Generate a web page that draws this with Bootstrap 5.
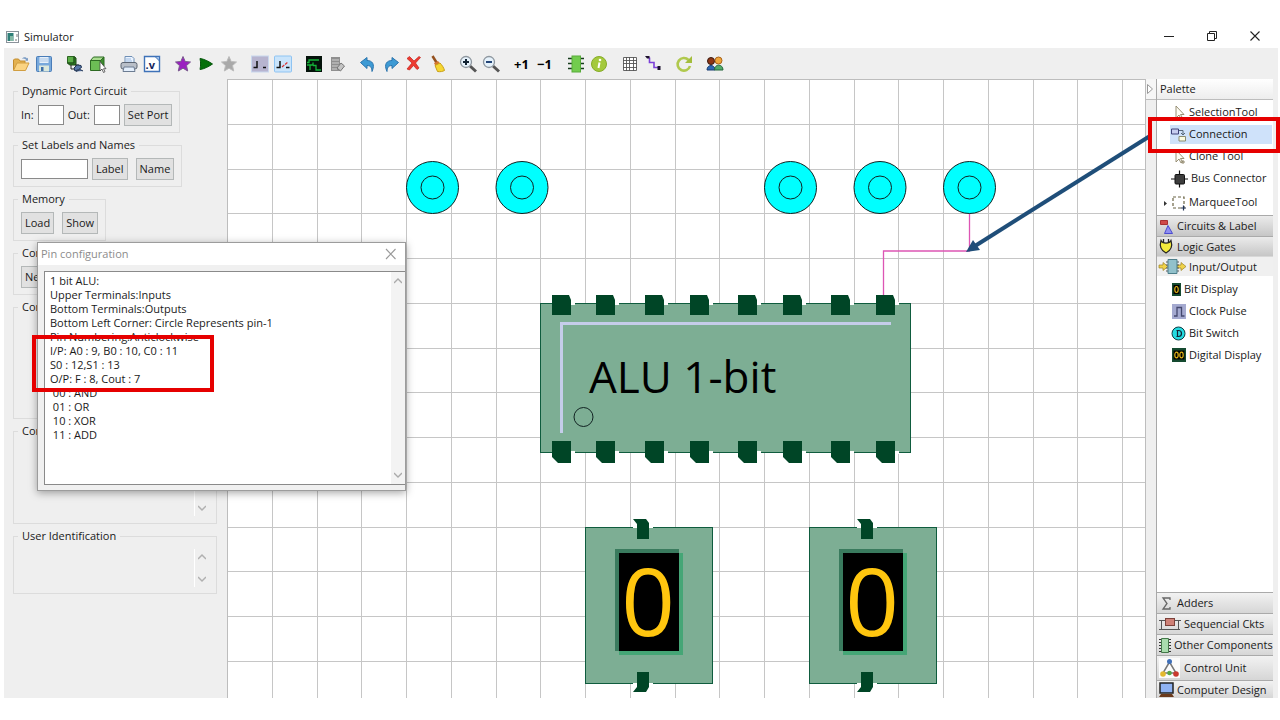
<!DOCTYPE html>
<html lang="en">
<head>
<meta charset="utf-8">
<meta name="viewport" content="width=device-width, initial-scale=1">
<title>Simulator</title>
<link href="https://cdn.jsdelivr.net/npm/bootstrap@5.3.0/dist/css/bootstrap.min.css" rel="stylesheet">
<style>
  :root { --face: #efefef; --edge: #dcdcdc; --line: #bdbdbd; --ink: #1a1a1a; }
  body { font-family: "Open Sans", "Noto Sans", sans-serif; font-size: 11px; line-height: 14px; color: var(--ink); background: #fff; }
  button { font: inherit; color: inherit; }
  .shell { min-height: 100vh; padding: 25px 2px 22px 4px; }
  .title-bar { height: 23px; padding: 0 2px; }
  .win-btn { width: 43px; height: 21px; border: 0; background: none; padding: 0; display: flex; align-items: center; justify-content: center; }
  .tool-strip { height: 31px; background: var(--face); padding-left: 5px; }
  .tool { width: 23px; height: 24px; padding: 0; border: 0; background: none; display: flex; align-items: center; justify-content: center; }
  .tool svg { width: 18px; height: 18px; overflow: visible; }
  .step { font-size: 13px; font-weight: 700; color: #000; }
  .work { background: var(--face); }
  .side { width: 223px; padding: 5px 10px 0 9px; gap: 5px; }
  .group-box { min-width: 0; border: 1px solid var(--edge); padding: 6px 7px; align-self: flex-start; }
  .group-box.wide { align-self: stretch; }
  .group-box > legend { float: none; width: auto; margin: 0 0 0 -3px; padding: 0 4px; font-size: 11px; line-height: 14px; height: 14px; }
  .field { height: 20px; border: 1px solid #8a8a8a; background: #fff; padding: 0 3px; border-radius: 0; }
  .field-s { width: 26px; } .field-m { width: 67px; }
  .push { height: 22px; border: 1px solid #b4b8b8; background: #e1e1e1; padding: 0 3px; }
  .h-a { min-height: 119px; } .h-b { min-height: 100px; } .h-c { min-height: 62px; }
  .spin { width: 15px; border-left: 1px solid #fff; padding: 4px 0; }
  .spin-l { height: 72px; } .spin-s { height: 38px; }
  .board { background: #fff; border: 1px solid var(--line); border-bottom: 0; min-width: 0; }
  .board svg { display: block; width: 100%; height: 100%; }
  .flyout { width: 10px; }
  .flyout button { width: 10px; height: 21px; padding: 0; border: 0; border-bottom: 1px solid var(--line); background: #f6f6f6; display: flex; align-items: center; }
  .palette { width: 117px; margin-right: 5px; background: #fff; border-left: 1px solid #a8a8a8; }
  .palette-head { height: 21px; padding-left: 3px; border-bottom: 1px solid var(--line); background: linear-gradient(#fff, #ededed); }
  .tools-list { padding-top: 1px; } .parts-list { padding-top: 2px; }
  .entry { height: 22px; border: 0; background: none; padding: 0 0 0 14px; display: flex; align-items: center; gap: 3px; text-align: left; white-space: nowrap; width: 100%; }
  .entry svg { width: 15px; height: 15px; flex: none; overflow: visible; }
  .entry svg.w17 { width: 17px; } .entry svg.w10 { width: 10px; } .entry svg.w5 { width: 5px; }
  .entry.tall { height: 26px; padding-left: 6px; }
  .entry.picked { background: linear-gradient(#cfe2fa, #cfe2fa) no-repeat 13px 2px / 102px 19px; }
  .drawer { height: 21px; border: 0; border-top: 1px solid #aaa; padding: 0 0 0 2px; background: linear-gradient(#ebebeb, #c6c6c6); display: flex; align-items: center; gap: 3px; text-align: left; white-space: nowrap; width: 100%; }
  .drawer.soft { background: linear-gradient(#f2f2f2, #d6d6d6); }
  .drawer.slim { height: 20px; }
  .drawer.open { height: 20px; background: #f0f0f0; border-color: #d8d8d8; }
  .drawer.tight { gap: 0; }
  .drawer.big { height: 25px; } .drawer.low { height: 18px; }
  .drawer svg { width: 15px; height: 15px; flex: none; overflow: visible; }
  .drawer svg.w22 { width: 22px; } .drawer svg.w27 { width: 27px; } .drawer svg.h20 { height: 20px; }
  .pin-window { left: 33px; top: 163px; width: 369px; height: 249px; background: #f0f0f0; border: 1px solid #9c9c9c; box-shadow: 0 2px 8px rgba(0,0,0,.35); }
  .pin-title { height: 22px; background: #fff; color: #8c8c8c; padding: 0 3px; }
  .pin-body { margin: 6px 0 5px 6px; border: 1px solid #8a8a8a; border-right: 0; background: #fff; }
  .pin-text { border: 0; resize: none; padding: 2px 5px; overflow: hidden; outline: 0; line-height: 14px; color: var(--ink); background: #fff; font: inherit; }
  .pin-scroll { width: 14px; background: #f3f3f3; padding: 6px 0; }
  .mark-box { border: 4px solid #e60000; pointer-events: none; }
  .mark-pins { left: 28px; top: 256px; width: 182px; height: 57px; }
  .mark-tool { right: -2px; top: 38px; width: 132px; height: 36px; }
  .pointer { right: 119px; top: 50px; width: 190px; height: 130px; pointer-events: none; overflow: visible; }
</style>
</head>
<body class="overflow-x-hidden">
<div class="shell d-flex flex-column">

  <header class="title-bar d-flex align-items-start">
    <svg class="align-self-center" width="14" height="12" viewBox="0 0 14 12"><rect x=".5" y=".5" width="12" height="11" fill="#fff" stroke="#8a929a"/><rect x="1.500" y="2" width="6" height="8" fill="#2f7f78"/><rect x="4" y="5" width="3" height="5" fill="#85b9a5"/><path d="M9 9h2M11 3v3" stroke="#777"/></svg>
    <span class="ms-1 flex-grow-1 align-self-center">Simulator</span>
    <button class="win-btn" aria-label="Minimize"><svg width="12" height="12" viewBox="0 0 12 12"><path d="M1 6.500h10" stroke="#222"/></svg></button>
    <button class="win-btn" aria-label="Restore"><svg width="12" height="12" viewBox="0 0 12 12" fill="none" stroke="#222"><path d="M1.500 3.500h7v7h-7zM3.500 3.500v-2h7v7h-2"/></svg></button>
    <button class="win-btn" aria-label="Close"><svg width="12" height="12" viewBox="0 0 12 12"><path d="M1.500 1.500l9 9M10.500 1.500l-9 9" stroke="#222" stroke-width="1.100"/></svg></button>
  </header>

  <nav class="tool-strip d-flex align-items-center gap-2" aria-label="Tools">
    <div class="d-flex">
      <button class="tool" aria-label="Open"><svg viewBox="0 0 18 18"><path d="M1.500 15V5l1-1h4l1.500 2h5v2" fill="#e3b14f" stroke="#c38d2e"/><path d="M10 3.500c2-2 4-1.500 5 0l1-.8v3h-3l1-1c-1-1-2.500-1-4-1.200z" fill="#7b9cc4"/><path d="M1.500 15.500L5 8h12l-3.500 7.500z" fill="#fbd482" stroke="#d19e41"/></svg></button>
      <button class="tool" aria-label="Save"><svg viewBox="0 0 18 18"><rect x="1.500" y="1.500" width="15" height="15" rx="1" fill="#78a9dc" stroke="#4a7db8"/><rect x="4.500" y="2" width="9" height="6" fill="#e6f0fa"/><path d="M5 4h8M5 6h8" stroke="#a9c5e4"/><rect x="4" y="10.500" width="10" height="6" fill="#dbe8dc"/><rect x="6" y="12" width="2.500" height="4" fill="#3d6ea8"/></svg></button>
    </div>
    <div class="d-flex">
      <button class="tool" aria-label="Build circuit"><svg viewBox="0 0 18 18"><path d="M1.500 1.500h6.500v6.500h-6.500z" fill="#5cae48" stroke="#2b6420"/><path d="M8 1.500l2 1.500v7H3.500l-2-2h6.500z" fill="#2e7a22" stroke="#1e4c16"/><path d="M5 10v4h4M9 10h4" stroke="#222" fill="none"/><path d="M8 13l3-3 4 .5.500 2-3 2-3.500 1.500zM10 16.500l4-2 3 1.500" fill="#5876a8" stroke="#1f3352"/></svg></button>
      <button class="tool" aria-label="Select block"><svg viewBox="0 0 18 18"><path d="M1.500 5.500h10v10h-10z" fill="#6cbd55" stroke="#2d6b22"/><path d="M1.500 5.500l3-3.500h10.500l-3.500 3.500z" fill="#a9dc90" stroke="#2d6b22"/><path d="M11.500 5.500L15 2v9l-3.500 4.500z" fill="#3b8c2d" stroke="#2d6b22"/><path d="M11 6.500v9.500l2-2 1.500 3.500 1.500-.8-1.500-3h2.500z" fill="#fff" stroke="#444" stroke-width=".8"/></svg></button>
    </div>
    <div class="d-flex">
      <button class="tool" aria-label="Print"><svg viewBox="0 0 18 18"><path d="M5 8V1.500h7l2 2V8" fill="#eaf3ff" stroke="#6f8fb5"/><rect x="1" y="7.500" width="16" height="6.500" rx="2" fill="#b9bfc8" stroke="#5d6673"/><path d="M4 12h10l1 4.500H3z" fill="#e4effc" stroke="#6c7c92"/><path d="M6 4h5M6 6h6" stroke="#9dbbe0"/></svg></button>
      <button class="tool" aria-label="Verilog"><svg viewBox="0 0 18 18"><path d="M1.500 1.500h15v15h-15z" fill="#fff" stroke="#3e72b8" stroke-width="1.400"/><path d="M12 1.500l4.500 4.500V1.500z" fill="#9fc0ea" stroke="#3e72b8"/><text x="2.500" y="14" font-size="11" font-weight="700" fill="#16245c">.v</text></svg></button>
    </div>
    <div class="d-flex">
      <button class="tool" aria-label="Start"><svg viewBox="0 0 18 18"><path d="M9 1.500l2.200 5 5.300.5-4 3.600 1.200 5.400L9 13.200 4.300 16l1.200-5.400-4-3.600 5.300-.5z" fill="#9a1fc0" stroke="#7a5a8e"/></svg></button>
      <button class="tool" aria-label="Run"><svg viewBox="0 0 18 18"><path d="M3 3.500c4.500.5 9.500 3.500 12.500 5.500-3 2-8 5-12.500 5.500.8-3.500.8-7.500 0-11z" fill="#06700b" stroke="#04560a"/></svg></button>
      <button class="tool" aria-label="Stop"><svg viewBox="0 0 18 18"><path d="M9 1.500l2.200 5 5.300.5-4 3.600 1.200 5.400L9 13.200 4.300 16l1.200-5.400-4-3.600 5.300-.5z" fill="#a9a9a9" stroke="#bbb"/></svg></button>
    </div>
    <div class="d-flex">
      <button class="tool" aria-label="Switch closed"><svg viewBox="0 0 18 18"><rect x=".5" y="1" width="17" height="16" fill="#b7b4cf" stroke="#c9d8ee"/><path d="M2.500 12.500H6V6" fill="none" stroke="#111" stroke-width="1.500"/><path d="M12 12.500h3" stroke="#111" stroke-width="1.500"/></svg></button>
      <button class="tool" aria-label="Switch open"><svg viewBox="0 0 18 18"><rect x=".5" y="1" width="17" height="16" rx="1" fill="#c9e4fb" stroke="#8fc4f2"/><path d="M2.500 12.500H6V6" fill="none" stroke="#111" stroke-width="1.500"/><path d="M12 12.500h3.500" stroke="#111" stroke-width="1.500"/><path d="M8 12l6-5" stroke="#d33" stroke-width="1.200" stroke-dasharray="3 1"/></svg></button>
    </div>
    <div class="d-flex">
      <button class="tool" aria-label="Timing"><svg viewBox="0 0 18 18"><rect x="1" y="1" width="16" height="16" fill="#04120a"/><path d="M2 7.500h2V5h10M2 10h6V7.500M5 15V10.500M8 10.500h3V15h5" fill="none" stroke="#15b43a" stroke-width="1.300"/></svg></button>
      <button class="tool" aria-label="Edit log"><svg viewBox="0 0 18 18"><path d="M3 2h9v14H3z" fill="#8f8f8f"/><path d="M4 5h7M4 8h7M4 11h7M4 14h5" stroke="#d0d0d0"/><path d="M9 13l4-5 3.500 3-4 5z" fill="#c4c4c4" stroke="#777"/></svg></button>
    </div>
    <div class="d-flex">
      <button class="tool" aria-label="Undo"><svg viewBox="0 0 18 18"><path d="M1.500 7.500L8 2.500v3c5 0 8.500 3.500 5 11 0-4-1.500-6-5-6v3z" fill="#3d9ad4" stroke="#2b74ad"/></svg></button>
      <button class="tool" aria-label="Redo"><svg viewBox="0 0 18 18"><path d="M16.500 7.500L10 2.500v3c-5 0-8.500 3.500-5 11 0-4 1.500-6 5-6v3z" fill="#3d9ad4" stroke="#2b74ad"/></svg></button>
      <button class="tool" aria-label="Delete"><svg viewBox="0 0 18 18"><path d="M2 3.500l2.500-2L9 6l5-4.500 1.500 1L10.500 8l3.500 5-2 1.500-3.500-4-4 4.500-2.500-1L7 8z" fill="#ee3a30" stroke="#c22018" stroke-width=".7"/></svg></button>
      <button class="tool" aria-label="Clear"><svg viewBox="0 0 18 18"><path d="M4.500 1l4 6.500" stroke="#94501e" stroke-width="2.500"/><path d="M6 8l4-2 2 2.500-4.500 2.500z" fill="#d6762e"/><path d="M7 10.500l5-2.500c2 2 4 5 4.500 7.500-2 1-4 1.500-7 1z" fill="#f6d732" stroke="#c9a017"/></svg></button>
    </div>
    <div class="d-flex">
      <button class="tool" aria-label="Zoom in"><svg viewBox="0 0 18 18"><path d="M11 11l6 5.500" stroke="#555" stroke-width="3"/><circle cx="7" cy="7" r="5.500" fill="#e6f2fb" stroke="#8e979f" stroke-width="1.300"/><path d="M4 7h6M7 4v6" stroke="#123" stroke-width="2"/></svg></button>
      <button class="tool" aria-label="Zoom out"><svg viewBox="0 0 18 18"><path d="M11 11l6 5.500" stroke="#555" stroke-width="3"/><circle cx="7" cy="7" r="5.500" fill="#e6f2fb" stroke="#8e979f" stroke-width="1.300"/><path d="M4 7h6" stroke="#247" stroke-width="2"/></svg></button>
    </div>
    <div class="d-flex">
      <button class="tool step">+1</button>
      <button class="tool step">−1</button>
    </div>
    <div class="d-flex">
      <button class="tool" aria-label="Chip"><svg viewBox="0 0 18 18"><path d="M1 3.500h16M1 8.500h16M1 13.500h16" stroke="#173c1c" stroke-width="1.300"/><rect x="5" y="1" width="8.500" height="16" fill="#72cc4e" stroke="#58ab3a"/></svg></button>
      <button class="tool" aria-label="Information"><svg viewBox="0 0 18 18"><circle cx="9" cy="9" r="7.500" fill="#a4c93c" stroke="#86ac28"/><circle cx="10" cy="5" r="1.300" fill="#fff"/><path d="M9.500 7.500L8.500 13" stroke="#fff" stroke-width="2"/></svg></button>
    </div>
    <div class="d-flex">
      <button class="tool" aria-label="Grid"><svg viewBox="0 0 18 18"><path d="M2.500 2.500h13v13h-13zM5.500 2v14M8.500 2v14M12.500 2v14M2 5.500h14M2 8.500h14M2 12.500h14" fill="#fff" stroke="#555" stroke-width=".9"/></svg></button>
      <button class="tool" aria-label="Wire"><svg viewBox="0 0 18 18"><path d="M5.500 2.500v5h4.500v5h4.500" fill="none" stroke="#7b3fd8" stroke-width="1.600"/><path d="M1 1h4.500v2.500H3zM13.500 11h3v4h-3z" fill="#1b0f2c"/></svg></button>
    </div>
    <div class="d-flex">
      <button class="tool" aria-label="Refresh"><svg viewBox="0 0 18 18"><path d="M13.500 5A6.300 6.300 0 1 0 15 11" fill="none" stroke="#b0c94d" stroke-width="2.600"/><path d="M17 1v7h-7z" fill="#a3bd3c"/></svg></button>
    </div>
    <div class="d-flex">
      <button class="tool" aria-label="Users"><svg viewBox="0 0 18 18"><circle cx="5" cy="6" r="3.500" fill="#8f3514" stroke="#37190f"/><path d="M1 15c0-6 8-6 8 0z" fill="#2e68b4" stroke="#193c70"/><circle cx="12.500" cy="5.500" r="3.500" fill="#f0a63a" stroke="#a9631a"/><path d="M8.500 15c0-6.500 8.500-6.500 8.500 0z" fill="#51ab68" stroke="#23673a"/></svg></button>
    </div>
  </nav>

  <main class="work d-flex flex-grow-1 position-relative">
    <aside class="side d-flex flex-column flex-shrink-0">
      <fieldset class="group-box">
        <legend>Dynamic Port Circuit</legend>
        <div class="d-flex align-items-center">
          <label for="pin-in" class="me-1">In:</label><input id="pin-in" class="field field-s me-1">
          <label for="pin-out" class="me-1">Out:</label><input id="pin-out" class="field field-s me-1">
          <button class="push">Set Port</button>
        </div>
      </fieldset>
      <fieldset class="group-box">
        <legend>Set Labels and Names</legend>
        <div class="d-flex align-items-center">
          <input class="field field-m me-1" aria-label="Label or name">
          <button class="push me-1">Label</button>
          <button class="push ms-1">Name</button>
        </div>
      </fieldset>
      <fieldset class="group-box">
        <legend>Memory</legend>
        <div class="d-flex align-items-center">
          <button class="push me-1">Load</button>
          <button class="push ms-1">Show</button>
        </div>
      </fieldset>
      <fieldset class="group-box">
        <legend>Con</legend>
        <div class="d-flex"><button class="push">New</button></div>
      </fieldset>
      <fieldset class="group-box wide h-a"><legend>Con</legend></fieldset>
      <fieldset class="group-box wide h-b">
        <legend>Con</legend>
        <div class="d-flex justify-content-end">
          <div class="spin spin-l d-flex flex-column justify-content-end align-items-center">
            <svg width="8" height="8" viewBox="0 0 8 8"><path d="M0 2l4 4 4-4" fill="none" stroke="#b0b0b0" stroke-width="1.500"/></svg>
          </div>
        </div>
      </fieldset>
      <fieldset class="group-box wide h-c">
        <legend>User Identification</legend>
        <div class="d-flex justify-content-end">
          <div class="spin spin-s d-flex flex-column justify-content-between align-items-center">
            <svg width="8" height="8" viewBox="0 0 8 8"><path d="M0 6l4-4 4 4" fill="none" stroke="#b0b0b0" stroke-width="1.500"/></svg>
            <svg width="8" height="8" viewBox="0 0 8 8"><path d="M0 2l4 4 4-4" fill="none" stroke="#b0b0b0" stroke-width="1.500"/></svg>
          </div>
        </div>
      </fieldset>
    </aside>

    <section class="board flex-grow-1 position-relative overflow-hidden" aria-label="Circuit board">
      <svg class="position-absolute top-0 start-0">
        <defs>
          <pattern id="grid" width="179" height="179" patternUnits="userSpaceOnUse" x="227" y="79">
            <path d="M.5 0v179M45.500 0v179M90.500 0v179M134.500 0v179M0 .5h179M0 45.500h179M0 90.500h179M0 134.500h179" stroke="#c6c6c6"/>
          </pattern>
          <g id="switch"><circle r="26" fill="#0ff" stroke="#122" /><circle r="11.500" fill="none" stroke="#122"/></g>
          <g id="pin-top"><path d="M0 0h17l2 5v15H0z" fill="#004526"/><path d="M19 7h4v3h-4z" fill="#fff"/></g>
          <g id="pin-low"><path d="M0 0h19v22H6l-6-6z" fill="#004526"/><path d="M19 10h4v3h-4z" fill="#fff"/></g>
          <g id="display">
            <rect x=".5" y=".5" width="127" height="156" fill="#7dae94" stroke="#0f5c3e"/>
            <path d="M48-2h20v3H48zM48 156h20v3H48z" fill="#fff"/>
            <path d="M48-8h13l3 4v16H52V-3zM52 145h12v15l-3 5H48l4-5z" fill="#004526"/>
            <path d="M30 22h64v102H30z" fill="#3a7b5e"/><path d="M34 26h64v102H34z" fill="#45a676"/><path d="M34 26h60v98H34z" fill="#000"/>
            <text x="63" y="109" text-anchor="middle" font-size="94" font-weight="500" fill="#ffc60f">0</text>
          </g>
        </defs>
        <g transform="translate(-228 -80)">
          <rect x="227" y="79" width="4000" height="3000" fill="url(#grid)"/>
          <path d="M969.500 213v38h-86V296" fill="none" stroke="#dd55b4" stroke-width="1.300"/>
          <use href="#switch" x="432.500" y="187.500"/><use href="#switch" x="522" y="187.500"/><use href="#switch" x="790.500" y="187.500"/><use href="#switch" x="880" y="187.500"/><use href="#switch" x="969.500" y="187.500"/>
          <rect x="540.500" y="303.500" width="370" height="149" fill="#7dae94" stroke="#0f5c3e"/>
          <use href="#pin-top" x="552" y="295"/><use href="#pin-top" x="596" y="295"/><use href="#pin-top" x="645" y="295"/><use href="#pin-top" x="690" y="295"/><use href="#pin-top" x="738" y="295"/><use href="#pin-top" x="783" y="295"/><use href="#pin-top" x="831" y="295"/><use href="#pin-top" x="876" y="295"/>
          <use href="#pin-low" x="552" y="441"/><use href="#pin-low" x="596" y="441"/><use href="#pin-low" x="645" y="441"/><use href="#pin-low" x="690" y="441"/><use href="#pin-low" x="738" y="441"/><use href="#pin-low" x="783" y="441"/><use href="#pin-low" x="831" y="441"/><use href="#pin-low" x="876" y="441"/>
          <path d="M561.500 433V323.500H891" fill="none" stroke="#c5cdea" stroke-width="3"/>
          <circle cx="583.500" cy="417" r="9.500" fill="none" stroke="#122"/>
          <text x="589" y="393" font-size="44" fill="#000">ALU 1-bit</text>
          <use href="#display" x="585" y="527"/><use href="#display" x="809" y="527"/>
        </g>
      </svg>
    </section>

    <div class="flyout flex-shrink-0">
      <button aria-label="Hide palette"><svg width="8" height="10" viewBox="0 0 8 10"><path d="M1.500.5v9l5-4.500z" fill="#fff" stroke="#999"/></svg></button>
    </div>

    <aside class="palette d-flex flex-column flex-shrink-0">
      <div class="palette-head d-flex align-items-center">Palette</div>
      <div class="tools-list d-flex flex-column">
        <button class="entry"><svg viewBox="0 0 15 15"><path d="M5 1v12l3-3 2 4 1.500-1-2-3.500H13z" fill="#fffef5" stroke="#8d8468" stroke-width=".9"/></svg>SelectionTool</button>
        <button class="entry picked"><svg viewBox="0 0 15 15"><path d="M.5 2h7v5h-7z" fill="#c6cdf0" stroke="#3e4279"/><path d="M8 9.500h6.500V14H8z" fill="#fafbe0" stroke="#8b8c70"/><path d="M8 3.500h4V8M10 6l2 2 2-2" fill="none" stroke="#567"/></svg>Connection</button>
        <button class="entry"><svg viewBox="0 0 15 15"><path d="M5 1v12l3-3 2 4 1.500-1-2-3.500H13z" fill="#fffef5" stroke="#8d8468" stroke-width=".9"/><path d="M12 11v4M10 13h4" stroke="#8d8468"/></svg>Clone Tool</button>
        <button class="entry"><svg class="w17" viewBox="0 0 17 15"><path d="M0 8h17M8.500-.5v17" stroke="#111" stroke-width="1.200"/><rect x="4" y="3.500" width="9.500" height="9.500" rx="1" fill="#3c3c3c" stroke="#111"/></svg>Bus Connector</button>
        <button class="entry tall"><svg class="w5" viewBox="0 0 5 15"><path d="M1 6v5l3-2.500z" fill="#333"/></svg><svg viewBox="0 0 15 15"><path d="M2 2h11v11H2z" fill="none" stroke="#6b6444" stroke-width="1.200" stroke-dasharray="3 2"/><path d="M12.500 10.500v5M10 13h5" stroke="#235" stroke-width="1.200"/></svg>MarqueeTool</button>
      </div>
      <button class="drawer"><svg viewBox="0 0 15 15"><path d="M1.500 1.500h7v4h-7z" fill="#d04a48" stroke="#a83130"/><path d="M9 6.500l4.500 8h-8z" fill="#8f8ff0" stroke="#4b4bd0"/></svg>Circuits &amp; Label</button>
      <button class="drawer slim"><svg viewBox="0 0 15 15"><path d="M4.500 0v4M9.500 0v4" stroke="#222" stroke-width="1.300"/><path d="M2 1.500c1.500 3.500 8.500 3.500 10 0 1.500 5 0 10-5 12.500C2 11.500.5 6.500 2 1.500z" fill="#f3ea3c" stroke="#222" stroke-width="1.200"/></svg>Logic Gates</button>
      <button class="drawer open"><svg class="w27" viewBox="0 0 27 15"><path d="M0 6h4V3.500L9 7.500 4 11.500V9H0zM18 6h4V3.500l5 4-5 4V9h-4z" fill="#f0d34a" stroke="#9c8322" stroke-width=".7"/><path d="M7 3h13M7 6h13M7 9h13M7 12h13" stroke="#555"/><path d="M9 .5h9v14H9z" fill="#92c1cb" stroke="#4d7f8b"/></svg>Input/Output</button>
      <div class="parts-list d-flex flex-column">
        <button class="entry"><svg class="w10" viewBox="0 0 10 15"><rect x="1" y="1" width="9" height="13" fill="#154a30"/><rect x="2.500" y="3" width="6" height="9" fill="#000"/><ellipse cx="5.500" cy="7.500" rx="1.700" ry="3" fill="none" stroke="#e0b418" stroke-width="1.200"/></svg>Bit Display</button>
        <button class="entry"><svg viewBox="0 0 15 15"><rect x="1" width="14" height="15" fill="#a5aad0"/><path d="M3 12h3V3.500h4.500V12h3" fill="none" stroke="#44486e" stroke-width="1.300"/></svg>Clock Pulse</button>
        <button class="entry"><svg viewBox="0 0 15 15"><circle cx="7.500" cy="7.500" r="6.500" fill="#24dbe0" stroke="#0b3c44"/><path d="M5.500 4.500h2c4 0 4 6 0 6h-2M6.500 4.500v6" fill="none" stroke="#123" stroke-width="1.200"/></svg>Bit Switch</button>
        <button class="entry"><svg viewBox="0 0 15 15"><rect x="1" width="14" height="14" fill="#154a30"/><rect x="2.500" y="2.500" width="11" height="9" fill="#000"/><g fill="none" stroke="#e0b418" stroke-width="1.200"><ellipse cx="5.500" cy="7" rx="1.700" ry="2.800"/><ellipse cx="10.500" cy="7" rx="1.700" ry="2.800"/></g></svg>Digital Display</button>
      </div>
      <div class="mt-auto">
        <button class="drawer soft"><svg viewBox="0 0 15 15"><path d="M11 4V2H4l4 5.500L4 13h7v-2" fill="none" stroke="#666" stroke-width="1.300"/></svg>Adders</button>
        <button class="drawer soft"><svg class="w22" viewBox="0 0 22 15"><path d="M0 3.500h22M2.500 3.500v9M0 12.500h21M19.500 4v8" stroke="#555"/><rect x="6.500" y="1.500" width="9" height="7" fill="#cf8177" stroke="#7c423b"/></svg>Sequencial Ckts</button>
        <button class="drawer soft tight"><svg viewBox="0 0 15 15"><path d="M0 1.500h12M0 4.500h12M0 7.500h12M0 10.500h12M0 13.500h12" stroke="#333"/><path d="M2.500.5h7v14h-7z" fill="#a9dcae" stroke="#44794a"/></svg>Other Components</button>
        <button class="drawer soft big"><svg class="w22 h20" viewBox="0 0 22 20"><rect width="21" height="20" fill="#fbfbfb"/><path d="M10.500 4L4 15h13z" fill="none" stroke="#777" stroke-width="1.500"/><circle cx="10.500" cy="3.500" r="2.500" fill="#3f6fb8"/><circle cx="4" cy="16" r="2.800" fill="#e3b92e"/><circle cx="10.500" cy="15" r="2.300" fill="#55a646"/><circle cx="17" cy="16" r="2.800" fill="#c93a2f"/></svg>Control Unit</button>
        <button class="drawer soft low"><svg viewBox="0 0 15 15"><path d="M1 1h13v10H1z" fill="#8fb2f2" stroke="#222" stroke-width="1.500"/><path d="M0 15l2-3h11l2 3z" fill="#6b3a1c"/></svg>Computer Design</button>
      </div>
    </aside>

    <section class="pin-window position-absolute d-flex flex-column" role="dialog" aria-label="Pin configuration">
      <div class="pin-title d-flex align-items-center justify-content-between">
        <span>Pin configuration</span>
        <button class="border-0 bg-transparent p-0 me-1 d-flex" aria-label="Close"><svg width="14" height="12" viewBox="0 0 14 12"><path d="M2 1l9.500 10M11.500 1L2 11" stroke="#999" stroke-width="1.100"/></svg></button>
      </div>
      <div class="pin-body d-flex flex-grow-1">
        <textarea class="pin-text flex-grow-1" readonly aria-label="Pin list">1 bit ALU:
Upper Terminals:Inputs
Bottom Terminals:Outputs
Bottom Left Corner: Circle Represents pin-1
Pin Numbering:Anticlockwise
I/P: A0 : 9, B0 : 10, C0 : 11
S0 : 12,S1 : 13
O/P: F : 8, Cout : 7
 00 : AND
 01 : OR
 10 : XOR
 11 : ADD</textarea>
        <div class="pin-scroll d-flex flex-column justify-content-between align-items-center">
          <svg width="8" height="6" viewBox="0 0 8 6"><path d="M0 5l4-4 4 4" fill="none" stroke="#aaa" stroke-width="1.300"/></svg>
          <svg width="8" height="6" viewBox="0 0 8 6"><path d="M0 1l4 4 4-4" fill="none" stroke="#aaa" stroke-width="1.300"/></svg>
        </div>
      </div>
    </section>

    <svg class="pointer position-absolute" viewBox="0 0 190 130"><path d="M181 7L6 117" stroke="#1f4e79" stroke-width="4"/><path d="M-3 123l7-12 7 10z" fill="#1f4e79"/></svg>
    <div class="mark-box mark-pins position-absolute"></div>
    <div class="mark-box mark-tool position-absolute"></div>
  </main>
</div>
<script src="https://cdn.jsdelivr.net/npm/bootstrap@5.3.0/dist/js/bootstrap.bundle.min.js"></script>
</body>
</html>
